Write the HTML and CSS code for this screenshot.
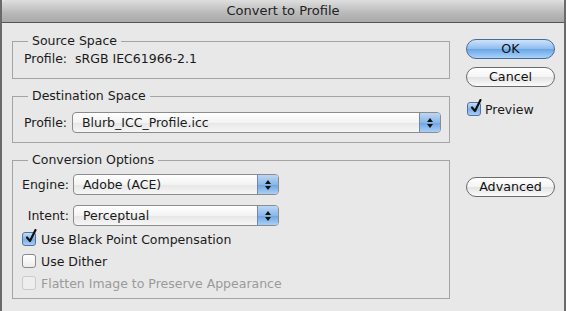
FILE: index.html
```html
<!DOCTYPE html>
<html lang="en">
<head>
    <meta charset="UTF-8">
    <meta name="viewport" content="width=device-width, initial-scale=1.0">
    <title>Convert to Profile</title>
    <link rel="stylesheet" href="styles.css">
</head>
<body>
    <div class="window">
        <div class="titlebar">Convert to Profile</div>
        <div class="content">
            <div class="groups">
                <fieldset class="group group-source">
                    <legend>Source Space</legend>
                    <div class="row">Profile:&nbsp; sRGB IEC61966-2.1</div>
                </fieldset>

                <fieldset class="group group-dest">
                    <legend>Destination Space</legend>
                    <div class="row">
                        <span class="label label-profile">Profile:</span>
                        <div class="popup popup-wide">
                            <span class="popup-text">Blurb_ICC_Profile.icc</span>
                            <span class="popup-arrows"><i class="up"></i><i class="down"></i></span>
                        </div>
                    </div>
                </fieldset>

                <fieldset class="group group-conv">
                    <legend>Conversion Options</legend>
                    <div class="row">
                        <span class="label label-right">Engine:</span>
                        <div class="popup">
                            <span class="popup-text">Adobe (ACE)</span>
                            <span class="popup-arrows"><i class="up"></i><i class="down"></i></span>
                        </div>
                    </div>
                    <div class="row row-intent">
                        <span class="label label-right">Intent:</span>
                        <div class="popup">
                            <span class="popup-text">Perceptual</span>
                            <span class="popup-arrows"><i class="up"></i><i class="down"></i></span>
                        </div>
                    </div>
                    <div class="checks">
                        <label class="check"><span class="box checked"><svg width="14" height="16" viewBox="0 0 14 16"><path d="M3 8.5 L6 12 L11.5 1" fill="none" stroke="#111" stroke-width="2.2" stroke-linecap="round" stroke-linejoin="round"/></svg></span>Use Black Point Compensation</label>
                        <label class="check"><span class="box"></span>Use Dither</label>
                        <label class="check disabled"><span class="box"></span>Flatten Image to Preserve Appearance</label>
                    </div>
                </fieldset>
            </div>

            <div class="actions">
                <button class="btn btn-default">OK</button>
                <button class="btn">Cancel</button>
                <label class="check check-preview"><span class="box checked"><svg width="14" height="16" viewBox="0 0 14 16"><path d="M3 8.5 L6 12 L11.5 1" fill="none" stroke="#111" stroke-width="2.2" stroke-linecap="round" stroke-linejoin="round"/></svg></span>Preview</label>
                <button class="btn btn-advanced">Advanced</button>
            </div>
        </div>
    </div>
</body>
</html>
```
FILE: styles.css
```css
html, body {
    margin: 0;
    height: 100%;
}
body {
    font-family: "DejaVu Sans", sans-serif;
    font-size: 12.5px;
    color: #1a1a1a;
    background: #e8e8e8;
}
.window {
    height: 311px;
    box-sizing: border-box;
    border-left: 2px solid #6a6a6a;
    border-right: 2px solid #6a6a6a;
    background: #e8e8e8;
}
.titlebar {
    height: 22px;
    line-height: 22px;
    border-bottom: 1px solid #555;
    background: linear-gradient(#dedede, #b9b9b9 60%, #a9a9a9);
    text-align: center;
    font-size: 13px;
    color: #222;
    border-radius: 4px 4px 0 0;
}
.content {
    display: flex;
}
.groups {
    width: 438px;
    padding-left: 10px;
}
.group {
    margin: 10px 0 0;
    padding: 0 8px 0 11px;
    border: 1px solid #a4a4a4;
    min-width: 0;
}
.group legend {
    margin-left: 4px;
    padding: 0 4px;
    line-height: 16px;
}
.group-source {
    margin-top: 10px;
    padding-top: 2px;
    padding-bottom: 11px;
}
.group-source .row {
    line-height: 16px;
}
.group-dest {
    margin-top: 9px;
    padding-top: 8px;
    padding-bottom: 9px;
}
.group-conv {
    margin-top: 9px;
    padding-top: 6px;
    padding-bottom: 4px;
}
.row {
    display: flex;
    align-items: center;
}
.row-intent {
    margin-top: 10px;
}
.label {
    margin-right: 4px;
}
.label-profile {
    width: 44px;
}
.label-right {
    width: 47px;
    text-align: right;
    margin-left: -2px;
}
.popup {
    display: flex;
    width: 206px;
    height: 21px;
    box-sizing: border-box;
    border: 1px solid #8c8c8c;
    border-radius: 4px;
    background: linear-gradient(#ffffff, #f3f3f3 50%, #e6e6e6 51%, #f6f6f6);
    overflow: hidden;
}
.popup-wide {
    flex: 1;
    width: auto;
}
.popup-text {
    flex: 1;
    padding-left: 9px;
    line-height: 19px;
}
.popup-arrows {
    width: 20px;
    border-left: 1px solid #6f88ad;
    background: linear-gradient(#bcd7f4, #8bb7e8 50%, #6ea3e0 51%, #a9d0f6);
    display: flex;
    flex-direction: column;
    align-items: center;
    justify-content: center;
    gap: 2px;
}
.popup-arrows i {
    width: 0;
    height: 0;
    border-left: 3px solid transparent;
    border-right: 3px solid transparent;
}
.popup-arrows .up {
    border-bottom: 4px solid #111;
}
.popup-arrows .down {
    border-top: 4px solid #111;
}
.checks {
    margin-top: 2px;
    margin-left: -2px;
}
.check {
    display: flex;
    align-items: center;
    height: 22px;
}
.box {
    width: 14px;
    height: 14px;
    box-sizing: border-box;
    border: 1px solid #8a8a8a;
    border-radius: 3px;
    background: linear-gradient(#ffffff, #ececec);
    margin-right: 5px;
    position: relative;
}
.box.checked {
    border-color: #5173a3;
    background: linear-gradient(#c7dcf5, #7fb0e8 55%, #a7cdf5);
}
.box svg {
    position: absolute;
    left: 1px;
    top: -4px;
}
.check.disabled {
    color: #9a9a9a;
}
.check.disabled .box {
    border-color: #cacaca;
    background: #eeeeee;
}
.actions {
    margin-left: 16px;
    width: 89px;
    display: flex;
    flex-direction: column;
    padding-top: 16px;
}
.btn {
    height: 20px;
    padding: 0;
    border: 1px solid #6b6b6b;
    border-radius: 10px;
    background: linear-gradient(#ffffff, #f4f4f4 50%, #e3e3e3 51%, #fbfbfb);
    font: inherit;
    font-size: 12.7px;
    color: #111;
    line-height: 18px;
}
.btn + .btn {
    margin-top: 8px;
}
.btn-default {
    border-color: #4b6a96;
    background: linear-gradient(#cfe3f9, #8dbcef 50%, #6aa5e6 51%, #a8d3fb);
}
.check-preview {
    margin-top: 12px;
    margin-left: 1px;
    height: 20px;
}
.check-preview .box {
    margin-right: 4px;
}
.btn-advanced {
    margin-top: 58px;
}
```
